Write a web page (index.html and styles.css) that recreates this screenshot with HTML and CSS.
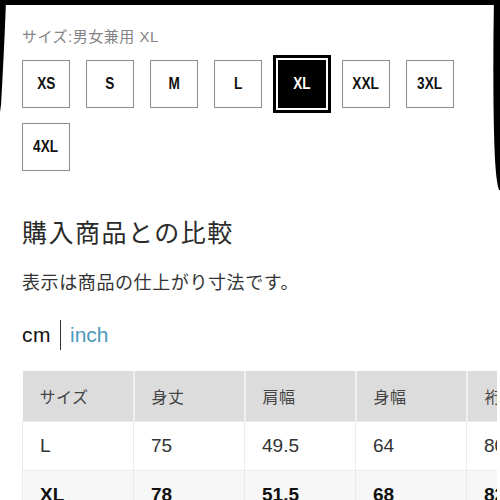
FILE: index.html
```html
<!DOCTYPE html>
<html lang="ja">
<head>
<meta charset="utf-8">
<link rel="stylesheet" href="styles.css">
</head>
<body>
<div class="page">
  <div class="size-label">サイズ:男女兼用 XL</div>
  <div class="sizes">
    <div class="size"><span class="size-text">XS</span></div>
    <div class="size"><span class="size-text">S</span></div>
    <div class="size"><span class="size-text">M</span></div>
    <div class="size"><span class="size-text">L</span></div>
    <div class="size selected"><span class="size-text">XL</span></div>
    <div class="size"><span class="size-text">XXL</span></div>
    <div class="size"><span class="size-text">3XL</span></div>
    <div class="size"><span class="size-text">4XL</span></div>
  </div>
  <h2 class="title">購入商品との比較</h2>
  <p class="note">表示は商品の仕上がり寸法です。</p>
  <div class="units"><span class="cm">cm</span><span class="sep"></span><span class="inch">inch</span></div>
  <div class="table-wrap">
    <table class="chart">
      <thead>
        <tr><th>サイズ</th><th>身丈</th><th>肩幅</th><th>身幅</th><th>裄丈</th></tr>
      </thead>
      <tbody>
        <tr><td>L</td><td>75</td><td>49.5</td><td>64</td><td>80</td></tr>
        <tr class="current"><td>XL</td><td>78</td><td>51.5</td><td>68</td><td>82</td></tr>
      </tbody>
    </table>
  </div>
</div>
<svg class="frame" width="500" height="500" viewBox="0 0 500 500" aria-hidden="true">
  <rect x="0" y="0" width="500" height="5" fill="#000"/>
  <path d="M0 0 L6 0 C5 30 3 70 1 105 L0 112 Z" fill="#000"/>
  <path d="M494 0 C493 50 493 120 495 160 C496 175 497 184 499 190 L500 190 L500 0 Z" fill="#000"/>
</svg>
</body>
</html>
```

FILE: styles.css
```css
html, body {
  margin: 0;
  padding: 0;
  background: #fff;
  overflow: hidden;
}
body {
  width: 500px;
  height: 500px;
  position: relative;
  font-family: "Liberation Sans", "Noto Sans CJK JP", sans-serif;
  color: #333;
}
.page {
  padding: 27px 0 0 22px;
}
.size-label {
  font-size: 15px;
  line-height: 20px;
  letter-spacing: 0.5px;
  color: #858585;
}
.sizes {
  margin-top: 13px;
  width: 460px;
  display: flex;
  flex-wrap: wrap;
  gap: 15px 16px;
}
.size {
  box-sizing: border-box;
  width: 48px;
  height: 48px;
  border: 1px solid #8c8c8c;
  display: flex;
  align-items: center;
  justify-content: center;
  font-family: "Liberation Sans", sans-serif;
  font-weight: bold;
  font-size: 17px;
  color: #111;
}
.size-text {
  display: inline-block;
  transform: scaleX(0.8);
}
.size.selected {
  background: #000;
  border-color: #000;
  color: #fff;
  outline: 3px solid #000;
  outline-offset: 2px;
}
.title {
  margin: 46px 0 0;
  font-size: 25px;
  line-height: 32px;
  font-weight: normal;
  letter-spacing: 1.5px;
  color: #2a2a2a;
}
.note {
  margin: 21px 0 0;
  font-size: 18px;
  line-height: 26px;
  letter-spacing: 0.6px;
  color: #333;
}
.units {
  margin-top: 23px;
  height: 32px;
  display: flex;
  align-items: center;
  font-size: 21px;
}
.cm {
  color: #111;
  letter-spacing: 0.5px;
}
.sep {
  width: 1px;
  height: 30px;
  background: #333;
  margin: 0 9px 0 9px;
}
.inch {
  color: #4f98bb;
}
.table-wrap {
  margin-top: 20px;
  width: 475px;
  overflow: hidden;
}
.chart {
  border-collapse: collapse;
  table-layout: fixed;
  width: 556px;
}
.chart th, .chart td {
  box-sizing: border-box;
  width: 111px;
  padding: 0 0 0 17px;
  text-align: left;
  vertical-align: middle;
  border: 1px solid #ececec;
  white-space: nowrap;
}
.chart th {
  height: 50px;
  background: #dcdcdc;
  border-color: #f0f0f0;
  border-width: 0 2px 0 0;
  font-weight: normal;
  font-size: 16px;
  letter-spacing: 0.5px;
  color: #444;
}
.chart td {
  height: 49px;
  font-size: 19px;
  color: #333;
}
.chart tr.current td {
  background: #f7f7f7;
  font-weight: bold;
  color: #111;
}
.frame {
  position: absolute;
  left: 0;
  top: 0;
  pointer-events: none;
}
```
